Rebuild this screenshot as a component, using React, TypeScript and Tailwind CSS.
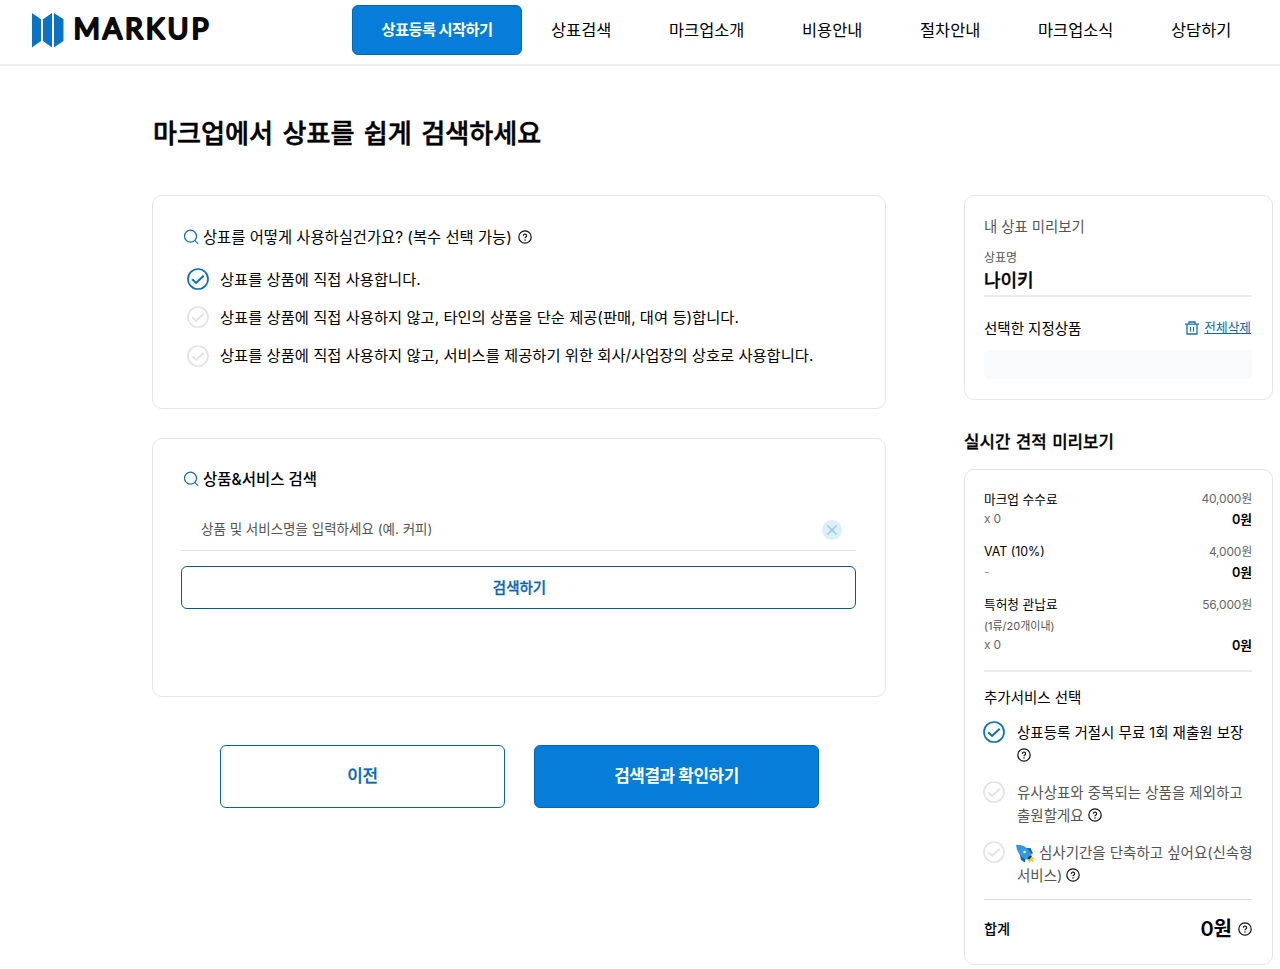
import type { ReactNode } from "react";
import clsx from "clsx";

const navItems = [
  { label: "상표검색", width: "w-[60px]" },
  { label: "마크업소개", width: "w-[75px]" },
  { label: "비용안내", width: "w-[60px]" },
  { label: "절차안내", width: "w-[60px]" },
  { label: "마크업소식", width: "w-[75px]" },
  { label: "상담하기", width: "w-[60px]" },
];

const usageOptions = [
  { label: "상표를 상품에 직접 사용합니다.", checked: true },
  {
    label: "상표를 상품에 직접 사용하지 않고, 타인의 상품을 단순 제공(판매, 대여 등)합니다.",
    checked: false,
  },
  {
    label:
      "상표를 상품에 직접 사용하지 않고, 서비스를 제공하기 위한 회사/사업장의 상호로 사용합니다.",
    checked: false,
  },
];

function Logo() {
  return (
    <svg width="180" height="38" viewBox="0 0 180 38" className="block">
      <g fill="#0c72c4">
        <path d="M1 1 10 7.3V29L1 35.5Z" />
        <path d="M12 7.3 21 1V35.5L12 29Z" />
        <path d="M23 1 32.5 7.3V29L23 35.5Z" />
      </g>
      <text
        x="42.5"
        y="26.700"
        textLength="135"
        lengthAdjust="spacing"
        fontFamily="Lato, sans-serif"
        fontWeight="400"
        fontSize="28.5"
        fill="#0a0a0a"
        stroke="#0a0a0a"
        strokeWidth="2.2"
        strokeLinejoin="round"
      >
        MARKUP
      </text>
    </svg>
  );
}

function SearchIcon() {
  return (
    <svg
      width="16"
      height="16"
      viewBox="0 0 16 16"
      fill="none"
      stroke="#0e6fb8"
      strokeWidth="1.2"
      className="mb-[2px]"
    >
      <circle cx="7.5" cy="7.2" r="6" />
      <path d="m11.9 11.6 3 2.8" strokeLinecap="round" />
    </svg>
  );
}

function HelpIcon({ className }: { className?: string }) {
  return (
    <svg
      width="14"
      height="14"
      viewBox="0 0 14 14"
      fill="none"
      stroke="#111"
      strokeWidth="1.2"
      className={clsx("shrink-0", className)}
    >
      <circle cx="7" cy="7" r="6.2" />
      <path d="M5.4 5.7a1.6 1.6 0 1 1 2.4 1.4c-.6.4-.8.6-.8 1.1" strokeWidth="1.2" />
      <circle cx="7" cy="9.9" r=".75" fill="#111" stroke="none" />
    </svg>
  );
}

function CheckIcon({ checked }: { checked: boolean }) {
  return (
    <svg
      width="22"
      height="22"
      viewBox="0 0 22 22"
      fill="none"
      stroke={checked ? "#0a70bd" : "#e3e3e3"}
      className="shrink-0"
    >
      <circle cx="11" cy="11" r="10" strokeWidth="1.7" />
      <path d="m5.2 11.2 3.9 3.7 7.6-7.2" strokeWidth="2" />
    </svg>
  );
}

function TrashIcon() {
  return (
    <svg width="14" height="14" viewBox="0 0 14 14" fill="none" stroke="#1273bd" strokeWidth="1.3">
      <path d="M0 3.2h14M4 3V1h6v2M2 3.4V13h10V3.4" />
      <path d="M5.5 6v4.6M8.5 6v4.6" strokeWidth="1.1" />
    </svg>
  );
}

function RocketIcon() {
  return (
    <svg width="20" height="20" viewBox="0 0 20 20" className="mr-[3px] -ml-px inline-block align-[-6px]">
      <path d="m14.5 11.500 4.800 4-2.600-.4 1 3.600-3-2.200-1.200 2.800-2.200-4.600Z" fill="#f7c331" />
      <path d="M8 4.200 14.500 4 17 9.600l-3 .4ZM3.500 8.500 5 16l4 2.500.5-4Z" fill="#1565a5" />
      <path d="M0 1c6-.6 11.5 1.4 15 8.6l1 3-2.6 3-4-.4C3.6 12.5 1 7.5 0 1Z" fill="#3498dc" />
      <circle cx="8.500" cy="8" r="1.300" fill="#d9edf8" />
      <path d="m13.200 12.200 2.600-.2-2.300 3.200-2.200-.6Z" fill="#24343f" />
    </svg>
  );
}

function Card({ className, children }: { className?: string; children: ReactNode }) {
  return (
    <section className={clsx("rounded-[10px] border border-[#e5e5e5] bg-white", className)}>
      {children}
    </section>
  );
}

function ServiceOption({ checked, children }: { checked: boolean; children: ReactNode }) {
  return (
    <div className="-ml-px flex h-[60px] gap-[12px]">
      <CheckIcon checked={checked} />
      <p
        className={clsx(
          "text-[14.5px] leading-[23px] whitespace-nowrap",
          checked ? "text-black" : "text-[#555]"
        )}
      >
        {children}
      </p>
    </div>
  );
}

export default function App() {
  return (
    <div className="h-[969px] w-[1280px] overflow-hidden bg-white font-['Inter','Noto_Sans_CJK_KR',sans-serif] text-black">
      <header className="flex h-[66px] border-b-2 border-[#f0f0f0]">
        <div className="w-[352px] pt-[12px] pl-[31px]">
          <Logo />
        </div>
        <button className="mt-[5px] h-[50px] w-[170px] rounded-[6px] border border-[#0567b4] bg-[#067dd8] text-[15.3px] font-bold tracking-[-0.6px] text-white">
          상표등록 시작하기
        </button>
        <nav className="ml-[29px] flex h-[60px] items-center gap-[58px] text-[16.4px] whitespace-nowrap">
          {navItems.map((item) => (
            <a key={item.label} className={item.width}>
              {item.label}
            </a>
          ))}
        </nav>
      </header>

      <div className="flex pl-[152px]">
        <main className="w-[734px]">
          <h1 className="pt-[48px] pl-px text-[26.1px] leading-[40px] font-medium whitespace-nowrap [-webkit-text-stroke:0.5px_black] [word-spacing:2.4px]">
            마크업에서 상표를 쉽게 검색하세요
          </h1>

          <Card className="mt-[41px] h-[214px] px-[30px] pt-[27px]">
            <h2 className="flex h-[29px] items-center text-[15.35px] whitespace-nowrap">
              <SearchIcon />
              <span className="mt-px ml-[4px]">상표를 어떻게 사용하실건가요? (복수 선택 가능)</span>
              <HelpIcon className="mb-px ml-[6px]" />
            </h2>
            <ul className="mt-[8px] pl-[4px]">
              {usageOptions.map((option) => (
                <li
                  key={option.label}
                  className="flex h-[38.3px] items-center gap-[11px] text-[15.33px] whitespace-nowrap"
                >
                  <CheckIcon checked={option.checked} />
                  <span className="pt-[2px]">{option.label}</span>
                </li>
              ))}
            </ul>
          </Card>

          <Card className="mt-[29px] h-[259px] pt-[27px] pr-[29px] pl-[28px]">
            <h2 className="flex h-[28px] items-center pl-[2px] text-[15.5px] font-medium">
              <SearchIcon />
              <span className="ml-[4px]">상품&amp;서비스 검색</span>
            </h2>
            <div className="mt-[14px] flex h-[43px] items-center justify-between border-b border-[#dedede] pr-[14px] pl-[20px] text-[13.5px] text-[#555]">
              <span className="pt-px">상품 및 서비스명을 입력하세요 (예. 커피)</span>
              <svg width="20" height="20" viewBox="0 0 20 20" fill="none" className="mt-px">
                <circle cx="10" cy="10" r="10" fill="#dceffb" />
                <path d="m5.5 5.5 9 9m0-9-9 9" stroke="#8fc5e8" strokeWidth="1.2" />
              </svg>
            </div>
            <button className="mt-[15px] h-[43px] w-full rounded-[6px] border border-[#07579a] pl-[2px] text-[14.5px] font-medium text-[#0968b0] [-webkit-text-stroke:0.3px]">
              검색하기
            </button>
          </Card>

          <div className="mt-[48px] flex justify-center gap-[29px] pl-px text-[16.9px] font-bold tracking-[-0.4px]">
            <button className="h-[63px] w-[285px] rounded-[6px] border border-[#0b62a7] font-medium text-[#0968b0] [-webkit-text-stroke:0.3px]">
              이전
            </button>
            <button className="h-[63px] w-[285px] rounded-[6px] border border-[#0567b4] bg-[#067dd8] text-white">
              검색결과 확인하기
            </button>
          </div>
        </main>

        <aside className="ml-[78px] w-[309px] pt-[129px]">
          <Card className="h-[205px] pt-[19px] pr-[20px] pl-[19px]">
            <p className="text-[14.4px] leading-[24px] text-[#555]">내 상표 미리보기</p>
            <p className="mt-[9px] text-[12px] leading-[20px] text-[#555]">상표명</p>
            <p className="h-[29px] border-b-2 border-[#ebebeb] text-[18px] leading-[26px] font-medium [-webkit-text-stroke:0.3px]">
              나이키
            </p>
            <div className="mt-[19px] flex h-[24px] items-center">
              <span className="pt-px text-[14.5px]">선택한 지정상품</span>
              <span className="mr-[5px] ml-auto">
                <TrashIcon />
              </span>
              <a className="mr-px text-[12.7px] text-[#1567ab] underline">전체삭제</a>
            </div>
            <div className="mt-[10px] h-[29px] rounded-[5px] bg-[#f8fafc]" />
          </Card>

          <h2 className="mt-[27px] text-[16.8px] leading-[30px] font-medium [-webkit-text-stroke:0.3px] [word-spacing:1px]">
            실시간 견적 미리보기
          </h2>

          <Card className="mt-[12px] h-[496px] pt-[19px] pr-[20px] pl-[19px]">
            <dl className="text-[12.7px] leading-[20px]">
              <div className="flex h-[53px] justify-between">
                <dt className="pt-px">
                  마크업 수수료
                  <p className="text-[12px] leading-[18px] tracking-[-0.2px] text-[#666]">x 0</p>
                </dt>
                <dd className="text-right">
                  <p className="text-[12px] tracking-[-0.2px] text-[#666]">40,000원</p>
                  <p className="leading-[21px] font-semibold">0원</p>
                </dd>
              </div>
              <div className="flex h-[53px] justify-between">
                <dt className="text-[12.4px]">
                  VAT (10%)
                  <p className="text-[12px] text-[#999]">-</p>
                </dt>
                <dd className="text-right">
                  <p className="text-[12px] tracking-[-0.2px] text-[#666]">4,000원</p>
                  <p className="leading-[22px] font-semibold">0원</p>
                </dd>
              </div>
              <div className="flex h-[75px] justify-between">
                <dt>
                  특허청 관납료
                  <p className="text-[11px] leading-[23px] text-[#555]">(1류/20개이내)</p>
                  <p className="text-[12px] leading-[14px] tracking-[-0.2px] text-[#666]">x 0</p>
                </dt>
                <dd className="text-right">
                  <p className="text-[12px] tracking-[-0.2px] text-[#666]">56,000원</p>
                  <p className="mt-[20px] leading-[22px] font-semibold">0원</p>
                </dd>
              </div>
            </dl>

            <h3 className="border-t-2 border-[#ebebeb] pt-[14px] text-[14.5px] leading-[24px]">
              추가서비스 선택
            </h3>

            <div className="mt-[11px]">
              <ServiceOption checked>
                상표등록 거절시 무료 1회 재출원 보장
                <br />
                <HelpIcon className="inline-block align-[-1px]" />
              </ServiceOption>
              <ServiceOption checked={false}>
                유사상표와 중복되는 상품을 제외하고
                <br />
                출원할게요 <HelpIcon className="inline-block align-[-1px]" />
              </ServiceOption>
              <ServiceOption checked={false}>
                <RocketIcon />
                심사기간을 단축하고 싶어요(신속형
                <br />
                서비스) <HelpIcon className="inline-block align-[-1px]" />
              </ServiceOption>
            </div>

            <div className="-mt-[2px] flex h-[58px] items-center border-t border-[#dedede]">
              <span className="text-[14.2px] font-medium">합계</span>
              <strong className="ml-auto text-[20px] font-semibold">0원</strong>
              <HelpIcon className="ml-[6px]" />
            </div>
          </Card>
        </aside>
      </div>
    </div>
  );
}
